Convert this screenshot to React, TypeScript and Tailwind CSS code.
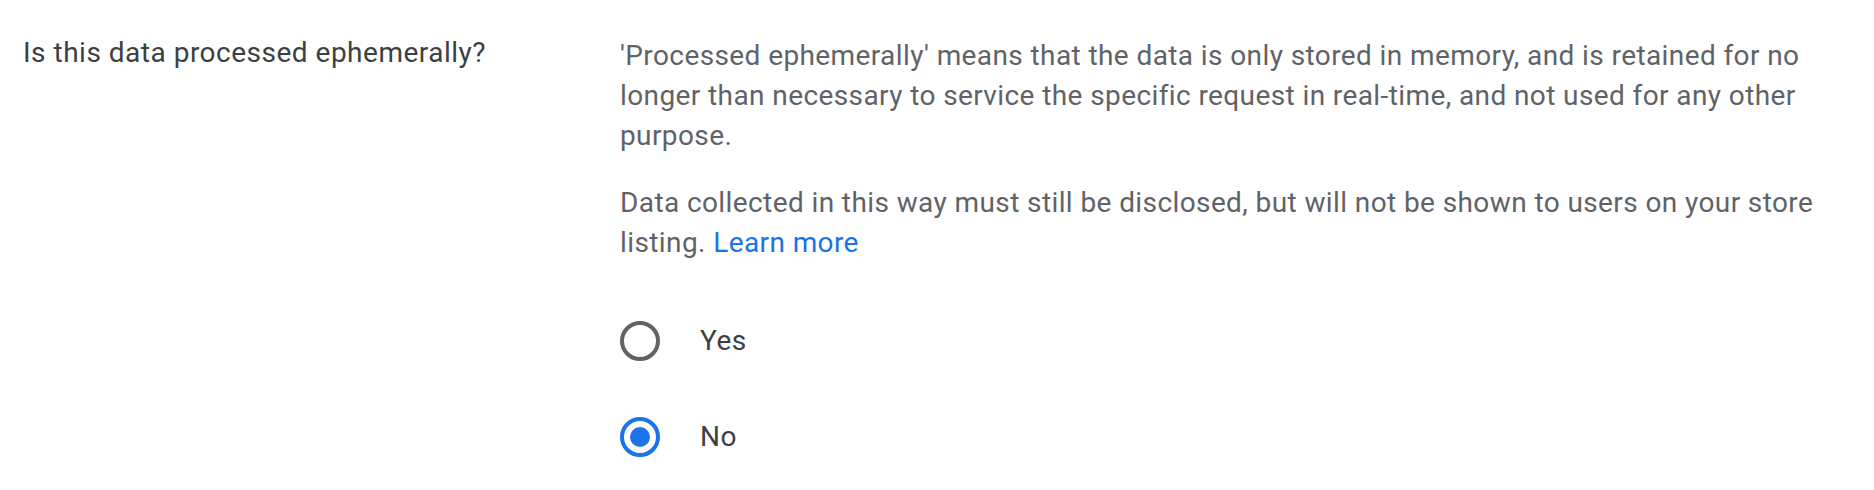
import React, { useState } from 'react'

const options = ['Yes', 'No']

function Radio({ label, checked, onSelect }: { label: string; checked: boolean; onSelect: () => void }) {
    return (
        <label className="flex items-center h-[96px] cursor-pointer" onClick={onSelect}>
            <span
                className={
                    checked
                        ? 'w-[40px] h-[40px] rounded-full border-[4px] border-[#1a73e8] flex items-center justify-center'
                        : 'w-[40px] h-[40px] rounded-full border-[4px] border-[#5f6368] flex items-center justify-center'
                }
            >
                {checked && <span className="w-[20px] h-[20px] rounded-full bg-[#1a73e8]" />}
            </span>
            <span className="ml-[40px] text-[28px] tracking-[0.5px] text-[#3c4043]">{label}</span>
        </label>
    )
}

export default function App() {
    const [value, setValue] = useState('No')

    return (
        <div className="flex w-[1874px] h-[490px] bg-white font-['Roboto',sans-serif]">
            <div className="w-[620px] shrink-0 pl-[23px] pt-[33px] text-[28px] leading-[40px] tracking-[0.5px] text-[#3c4043]">
                Is this data processed ephemerally?
            </div>
            <div className="flex-1 pt-[36px] text-[28px] leading-[40px] tracking-[0.4px] text-[#5f6368]">
                <p>
                    'Processed ephemerally' means that the data is only stored in memory, and is retained for no
                    <br />
                    longer than necessary to service the specific request in real-time, and not used for any other
                    <br />
                    purpose.
                </p>
                <p className="mt-[27px]">
                    Data collected in this way must still be disclosed, but will not be shown to users on your store
                    <br />
                    listing.{' '}
                    <a href="#" className="text-[#1a73e8]">
                        Learn more
                    </a>
                </p>
                <div className="mt-[30px]">
                    {options.map((o) => (
                        <Radio key={o} label={o} checked={value === o} onSelect={() => setValue(o)} />
                    ))}
                </div>
            </div>
        </div>
    )
}
